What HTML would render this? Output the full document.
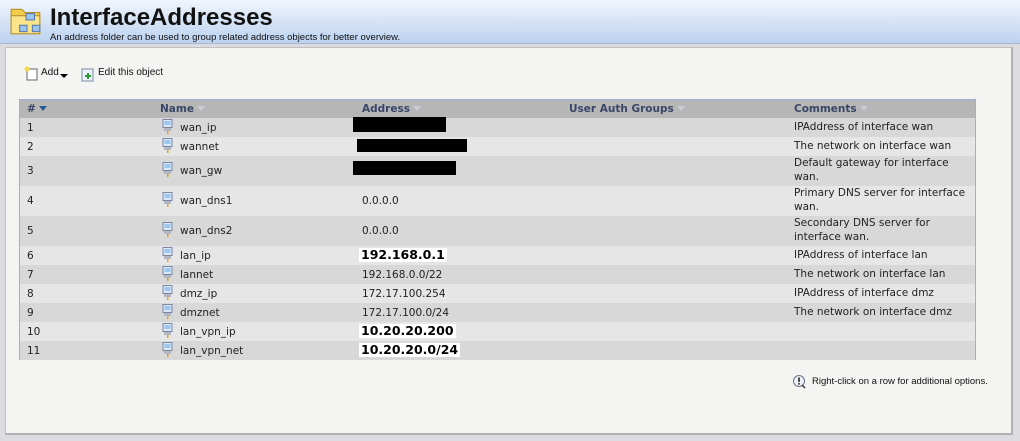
<!DOCTYPE html>
<html><head><meta charset="utf-8"><style>
*{margin:0;padding:0;box-sizing:border-box}
body{width:1020px;height:441px;background:#dcdce0;position:relative;overflow:hidden;font-family:"DejaVu Sans",Verdana,sans-serif;font-size:11px;color:#222}
.hdr{position:absolute;left:0;top:0;width:1020px;height:44px;background:linear-gradient(#f0f5fd,#bcd2f0);border-bottom:1px solid #a8b8d0}
.title{position:absolute;left:50px;top:4px;font-family:"Liberation Sans",Arial,sans-serif;font-weight:bold;font-size:24px;color:#111}
.sub{position:absolute;left:50px;top:32px;font-family:"Liberation Sans",Arial,sans-serif;font-size:9.5px;color:#111}
.panel{position:absolute;left:5px;top:47px;width:1008px;height:388px;background:#f4f4f2;border:1px solid #c0c0c0;border-right:2px solid #b0b0b0;border-bottom:2px solid #b0b0b0}
.tb{position:absolute;font-family:"Liberation Sans",Arial,sans-serif;font-size:10px;color:#111}
.tbl{position:absolute;left:19px;top:99px;width:957px;height:261px;border:1px solid #9ab0d8;background:#d8d8d8}
.r{position:absolute;left:0;width:955px}
.c{position:absolute;white-space:nowrap;font-size:10.5px;line-height:14px}
.h{font-weight:bold;color:#3a4668}
.ar{display:inline-block;width:0;height:0;border-left:4px solid transparent;border-right:4px solid transparent;border-top:5px solid #c8ccd4;margin-left:3px;vertical-align:1px}
.ico{position:absolute;width:11px;height:15px}
.blk{position:absolute;background:#000}
.bold{font-weight:bold;font-size:12.5px;background:#fff;padding:0 2px;color:#000}
</style></head><body>
<div class="hdr">
 <svg style="position:absolute;left:9px;top:4px" width="34" height="34" viewBox="0 0 32 32"><path d="M2 5h10l3 3h14v20H2z" fill="#f3cd4a" stroke="#b8902a"/><path d="M2 11h27v17H2z" fill="#fbe58a" stroke="#b8902a"/><rect x="16" y="9" width="8" height="6" fill="#9cc4ee" stroke="#5a7ca8"/><rect x="10" y="20" width="7" height="6" fill="#9cc4ee" stroke="#5a7ca8"/><rect x="22" y="20" width="7" height="6" fill="#9cc4ee" stroke="#5a7ca8"/></svg>
 <div class="title">InterfaceAddresses</div>
 <div class="sub">An address folder can be used to group related address objects for better overview.</div>
</div>
<div class="panel"></div>
<svg style="position:absolute;left:24px;top:66px" width="14" height="15"><rect x="3" y="3" width="10" height="11" fill="#fff" stroke="#666"/><circle cx="3" cy="3" r="2.5" fill="#f4d840"/></svg>
<div class="tb" style="left:41px;top:67px">Add</div>
<div style="position:absolute;left:60px;top:74px;border-left:4px solid transparent;border-right:4px solid transparent;border-top:4px solid #000"></div>
<svg style="position:absolute;left:80px;top:66px" width="15" height="16"><rect x="2" y="3" width="11" height="12" fill="#eef2fa" stroke="#7a8aa8"/><path d="M5 10h6M8 7v6" stroke="#2a9a2a" stroke-width="2"/></svg>
<div class="tb" style="left:98px;top:67px">Edit this object</div>

<div class="tbl">
 <div class="r" style="top:0;height:18px;background:#b6b6b6"></div>
 <div class="r" style="top:18px;height:19px;background:#d8d8d8"></div>
 <div class="r" style="top:37px;height:19px;background:#e6e6e6"></div>
 <div class="r" style="top:56px;height:30px;background:#d8d8d8"></div>
 <div class="r" style="top:86px;height:30px;background:#e6e6e6"></div>
 <div class="r" style="top:116px;height:30px;background:#d8d8d8"></div>
 <div class="r" style="top:146px;height:19px;background:#e6e6e6"></div>
 <div class="r" style="top:165px;height:19px;background:#d8d8d8"></div>
 <div class="r" style="top:184px;height:19px;background:#e6e6e6"></div>
 <div class="r" style="top:203px;height:19px;background:#d8d8d8"></div>
 <div class="r" style="top:222px;height:19px;background:#e6e6e6"></div>
 <div class="r" style="top:241px;height:19px;background:#d8d8d8"></div>
</div>
<div id="cells"></div>
<div class="c h" style="left:27px;top:102px">#<span class="ar" style="border-top-color:#2a5a9a"></span></div>
<div class="c h" style="left:160px;top:102px">Name<span class="ar"></span></div>
<div class="c h" style="left:362px;top:102px">Address<span class="ar"></span></div>
<div class="c h" style="left:569px;top:102px">User Auth Groups<span class="ar"></span></div>
<div class="c h" style="left:794px;top:102px">Comments<span class="ar"></span></div>

<script>
var rows=[
[120,127,"1","wan_ip","","IPAddress of interface wan"],
[139,146,"2","wannet","","The network on interface wan"],
[158,170,"3","wan_gw","","Default gateway for interface|wan."],
[188,200,"4","wan_dns1","0.0.0.0","Primary DNS server for interface|wan."],
[218,230,"5","wan_dns2","0.0.0.0","Secondary DNS server for|interface wan."],
[249,255,"6","lan_ip","B192.168.0.1","IPAddress of interface lan"],
[268,274,"7","lannet","192.168.0.0/22","The network on interface lan"],
[287,293,"8","dmz_ip","172.17.100.254","IPAddress of interface dmz"],
[306,312,"9","dmznet","172.17.100.0/24","The network on interface dmz"],
[325,331,"10","lan_vpn_ip","B10.20.20.200",""],
[344,350,"11","lan_vpn_net","B10.20.20.0/24",""]];
var h="";
rows.forEach(function(r){
 var m=r[1];
 h+='<div class="c" style="left:27px;top:'+(m-6)+'px">'+r[2]+'</div>';
 h+='<svg class="ico" style="left:162px;top:'+(m-8)+'px" viewBox="0 0 11 15"><rect x="1" y="0.5" width="9" height="8" fill="#dce8f6" stroke="#7a86a0"/><rect x="2.5" y="2" width="6" height="4" fill="#9cc8f0"/><rect x="2" y="9" width="7" height="3" fill="#b0b6c4"/><rect x="5" y="12" width="1.5" height="3" fill="#e8a020"/></svg>';
 h+='<div class="c" style="left:180px;top:'+(m-6)+'px">'+r[3]+'</div>';
 if(r[4]){ if(r[4][0]=="B") h+='<div class="c bold" style="left:359px;top:'+(m-7)+'px">'+r[4].slice(1)+'</div>'; else h+='<div class="c" style="left:362px;top:'+(m-6)+'px">'+r[4]+'</div>';}
 var cm=r[5].split("|");
 if(cm.length==2) h+='<div class="c" style="left:794px;top:'+(r[0]-2)+'px;line-height:14px">'+cm[0]+'<br>'+cm[1]+'</div>';
 else if(cm[0]) h+='<div class="c" style="left:794px;top:'+(m-7)+'px">'+cm[0]+'</div>';
});
document.getElementById("cells").innerHTML=h;
</script>
<div class="blk" style="left:353px;top:117px;width:93px;height:15px"></div>
<div class="blk" style="left:357px;top:139px;width:110px;height:13px"></div>
<div class="blk" style="left:353px;top:161px;width:103px;height:14px"></div>

<svg style="position:absolute;left:792px;top:374px" width="15" height="15"><circle cx="7" cy="7" r="5.5" fill="#eef0f6" stroke="#6a7488"/><rect x="6.2" y="3.5" width="1.6" height="4.5" fill="#222"/><rect x="6.2" y="9" width="1.6" height="1.6" fill="#222"/><path d="M10 11l3 3" stroke="#333" stroke-width="1.5"/></svg>
<div class="tb" style="left:812px;top:376px;font-size:9.5px">Right-click on a row for additional options.</div>
</body></html>
